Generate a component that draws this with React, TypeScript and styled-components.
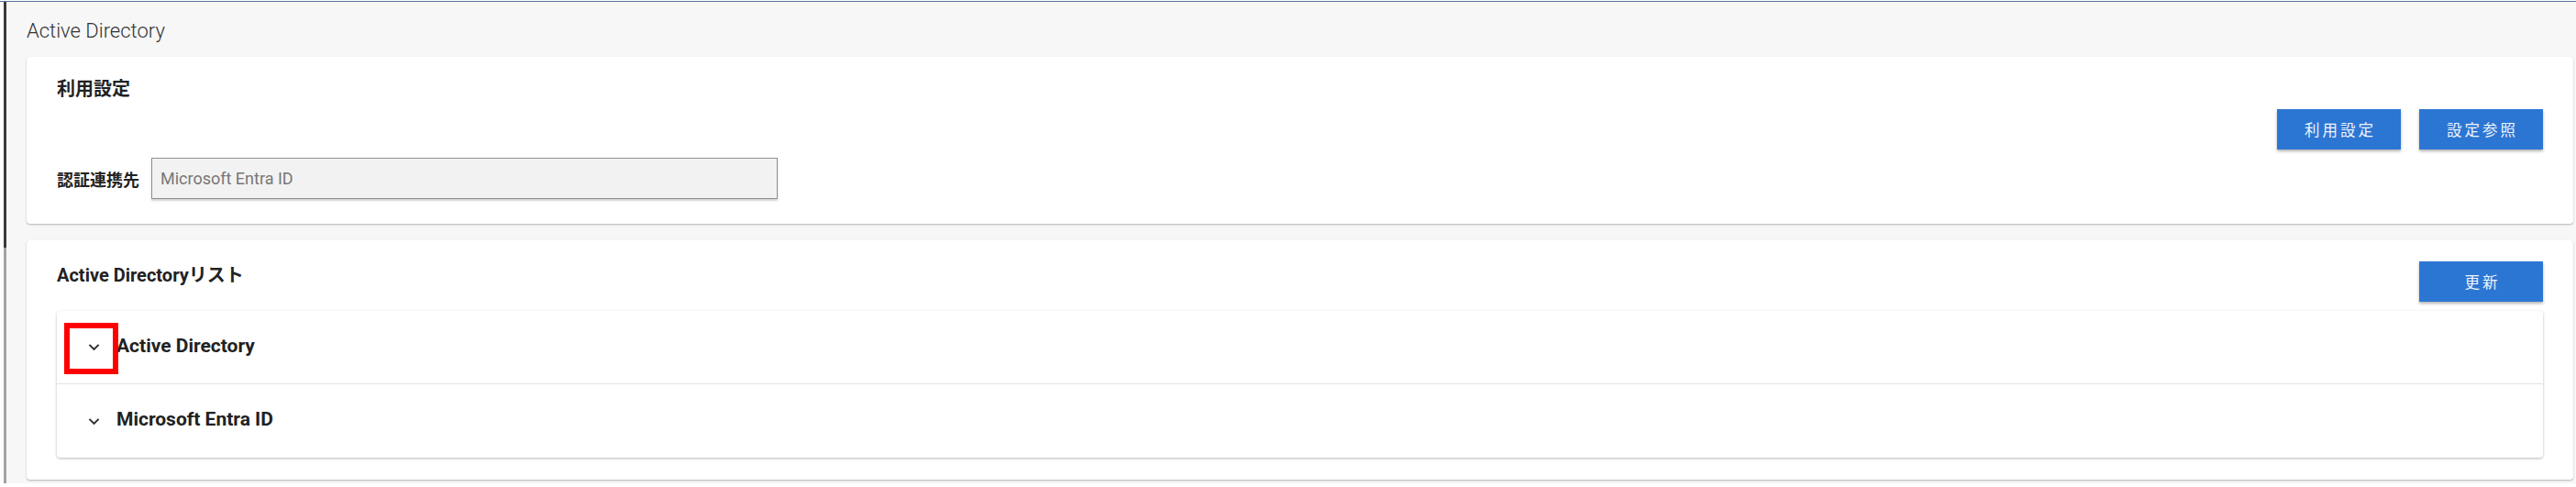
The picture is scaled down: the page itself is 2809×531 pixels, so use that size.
import React from "react";
import styled, { createGlobalStyle } from "styled-components";

const GlobalStyle = createGlobalStyle`
  body {
    margin: 0;
    background: #ffffff;
    font-family: Roboto, "Noto Sans CJK JP", sans-serif;
    color: #222222;
  }
  * {
    box-sizing: border-box;
  }
`;

const Shell = styled.div`
  margin-top: 1px;
  border-top: 1px solid #5a7399;
  padding-left: 4px;
`;

const Frame = styled.div`
  background: linear-gradient(#3a3a3a, #3a3a3a) left top / 3px 268px no-repeat,
    linear-gradient(#a2a2a2, #a2a2a2) left top / 3px 100% no-repeat, #f7f7f7;
  padding: 0 3px 4px 25px;
`;

const PageTitle = styled.h1`
  margin: 0;
  padding: 19px 0 15px;
  font-size: 22px;
  line-height: 26px;
  font-weight: 300;
  color: #333333;
`;

const Card = styled.section<{ $gap?: number }>`
  background: #ffffff;
  border-radius: 4px;
  box-shadow: 0 1px 2px rgba(0, 0, 0, 0.28);
  margin-top: ${(p) => p.$gap ?? 0}px;
`;

const SettingsCard = styled(Card)`
  display: flex;
  justify-content: space-between;
  padding: 21px 33px 27px 33px;
`;

const ListCard = styled(Card)`
  padding: 23px 33px 24px 33px;
`;

const SectionTitle = styled.h2`
  margin: 0;
  font-size: 20px;
  line-height: 28px;
  font-weight: 700;
  color: #222222;
`;

const LeftColumn = styled.div`
  display: flex;
  flex-direction: column;
`;

const FieldRow = styled.div`
  display: flex;
  align-items: center;
  gap: 13px;
  margin-top: 61px;
`;

const FieldLabel = styled.label`
  font-size: 18px;
  font-weight: 700;
  color: #222222;
`;

const ReadOnlyInput = styled.div`
  width: 683px;
  height: 45px;
  display: flex;
  align-items: center;
  padding-left: 9px;
  background: #f2f2f2;
  border: 1px solid #8f8f8f;
  box-shadow: 0 2px 2px rgba(0, 0, 0, 0.18);
  font-size: 18px;
  color: #777777;
`;

const ButtonGroup = styled.div<{ $offset?: number }>`
  display: flex;
  gap: 20px;
  margin-top: ${(p) => p.$offset ?? 0}px;
`;

const PrimaryButton = styled.button`
  width: 135px;
  height: 44px;
  border: none;
  border-radius: 0;
  background: #2c76d3;
  color: #eef4fc;
  font-family: Roboto, "Noto Sans CJK JP", sans-serif;
  font-size: 16.5px;
  letter-spacing: 3px;
  padding: 0 0 0 3px;
  box-shadow: 0 2px 3px rgba(0, 0, 0, 0.3);
  cursor: pointer;
`;

const ListHeader = styled.div`
  display: flex;
  justify-content: space-between;
  align-items: flex-start;

  & > h2 {
    margin-top: 1px;
  }
`;

const ListPanel = styled.div`
  margin-top: 10px;
  background: #ffffff;
  border-radius: 4px;
  box-shadow: 0 1px 3px rgba(0, 0, 0, 0.28);
`;

const ListRow = styled.div<{ $last?: boolean }>`
  position: relative;
  height: 80px;
  display: flex;
  align-items: center;
  gap: 13px;
  padding-left: 29px;
  border-bottom: ${(p) => (p.$last ? "none" : "1px solid #e2e2e2")};
`;

const RowLabel = styled.span`
  font-size: 21px;
  line-height: 24px;
  font-weight: 700;
  color: #222222;
  margin-bottom: 4px;
`;

const Highlight = styled.div`
  position: absolute;
  left: 8px;
  top: 13px;
  width: 59px;
  height: 56px;
  border: 6px solid #ff0000;
  pointer-events: none;
`;

const Chevron = () => (
  <svg width="23" height="23" viewBox="0 0 24 24" aria-hidden="true">
    <path
      d="M16.59 8.59L12 13.17 7.41 8.59 6 10l6 6 6-6z"
      fill="#2e2e2e"
    />
  </svg>
);

const directories = [
  { name: "Active Directory", marked: true },
  { name: "Microsoft Entra ID", marked: false },
];

const App = () => (
  <>
    <GlobalStyle />
    <Shell>
      <Frame>
        <PageTitle>Active Directory</PageTitle>
        <SettingsCard>
          <LeftColumn>
            <SectionTitle>利用設定</SectionTitle>
            <FieldRow>
              <FieldLabel>認証連携先</FieldLabel>
              <ReadOnlyInput>Microsoft Entra ID</ReadOnlyInput>
            </FieldRow>
          </LeftColumn>
          <ButtonGroup $offset={36}>
            <PrimaryButton>利用設定</PrimaryButton>
            <PrimaryButton>設定参照</PrimaryButton>
          </ButtonGroup>
        </SettingsCard>
        <ListCard $gap={18}>
          <ListHeader>
            <SectionTitle>Active Directoryリスト</SectionTitle>
            <PrimaryButton>更新</PrimaryButton>
          </ListHeader>
          <ListPanel>
            {directories.map((d, i) => (
              <ListRow key={d.name} $last={i === directories.length - 1}>
                {d.marked && <Highlight />}
                <Chevron />
                <RowLabel>{d.name}</RowLabel>
              </ListRow>
            ))}
          </ListPanel>
        </ListCard>
      </Frame>
    </Shell>
  </>
);

export default App;
